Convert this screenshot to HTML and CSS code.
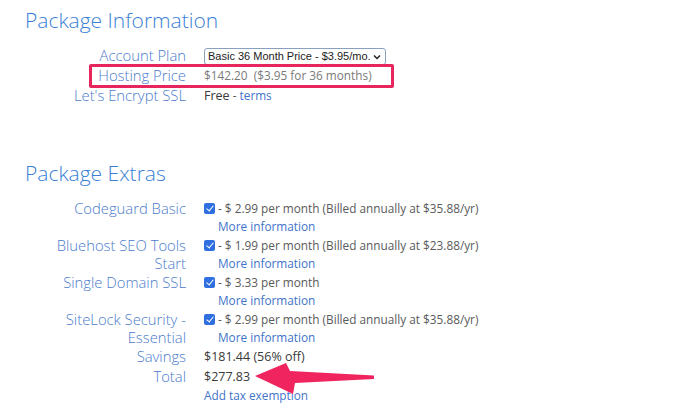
FILE: index.html
```html
<!DOCTYPE html>
<html>
<head>
<meta charset="utf-8">
<link rel="stylesheet" href="styles.css">
</head>
<body>
<div class="page">
  <section class="block">
    <h2 class="heading">Package Information</h2>
    <div class="grid">
      <div class="label">Account Plan</div>
      <div class="value">
        <div class="select"><span>Basic 36 Month Price - $3.95/mo.</span><svg class="caret" width="8" height="6" viewBox="0 0 8 6"><path d="M1 1.5 L4 4.5 L7 1.5" fill="none" stroke="#222" stroke-width="1.5"/></svg></div>
      </div>
      <div class="label">Hosting Price</div>
      <div class="value muted">$142.20&nbsp; ($3.95 for 36 months)</div>
      <div class="label">Let's Encrypt SSL</div>
      <div class="value"><span class="dark strong">Free</span> - <span class="link">terms</span></div>
    </div>
  </section>

  <section class="block extras">
    <h2 class="heading">Package Extras</h2>
    <div class="grid">
      <div class="label">Codeguard Basic</div>
      <div class="value opt-row"><span class="cb"></span><span class="opt">- $ 2.99 per month (Billed annually at $35.88/yr)<br><span class="link">More information</span></span></div>
      <div class="label">Bluehost SEO Tools<br>Start</div>
      <div class="value opt-row"><span class="cb"></span><span class="opt">- $ 1.99 per month (Billed annually at $23.88/yr)<br><span class="link">More information</span></span></div>
      <div class="label">Single Domain SSL</div>
      <div class="value opt-row"><span class="cb"></span><span class="opt">- $ 3.33 per month<br><span class="link">More information</span></span></div>
      <div class="label">SiteLock Security -<br>Essential</div>
      <div class="value opt-row"><span class="cb"></span><span class="opt">- $ 2.99 per month (Billed annually at $35.88/yr)<br><span class="link">More information</span></span></div>
      <div class="label">Savings</div>
      <div class="value dark strong">$181.44 (56% off)</div>
      <div class="label">Total</div>
      <div class="value dark strong">$277.83</div>
      <div class="label"></div>
      <div class="value"><span class="link">Add tax exemption</span></div>
    </div>
  </section>

  <div class="highlight"></div>
  <svg class="arrow" width="130" height="40" viewBox="250 360 130 40">
    <polygon points="255,376 286,363 290,371 374,375.5 374,379 295,383 293,394" fill="#f0245e"/>
  </svg>
</div>
</body>
</html>
```

FILE: styles.css
```css
html, body {
  margin: 0;
  padding: 0;
  background: #ffffff;
}
.page {
  position: relative;
  width: 700px;
  height: 420px;
  overflow: hidden;
  padding-left: 25px;
  box-sizing: border-box;
  font-family: "Open Sans", "Liberation Sans", sans-serif;
}
.heading {
  margin: 0;
  padding-top: 5px;
  font-size: 21px;
  font-weight: 300;
  line-height: 30px;
  color: #3a7fd6;
}
.extras {
  margin-top: 49px;
}
.extras .heading {
  margin-bottom: 12px;
}
.block:first-child .heading {
  margin-bottom: 12px;
}
.grid {
  display: grid;
  grid-template-columns: 161px auto;
  column-gap: 18px;
  row-gap: 2px;
}
.label {
  text-align: right;
  font-size: 14.8px;
  font-weight: 300;
  line-height: 17.5px;
  color: #4a7bcc;
}
.value {
  font-size: 11.8px;
  line-height: 17.5px;
  color: #5a5a5a;
}
.opt-row {
  display: flex;
  align-items: flex-start;
}
.muted {
  color: #7a7a7a;
}
.dark {
  color: #3a3a3a;
}
.strong {
  font-size: 12.5px;
}
.link {
  color: #3f74c9;
}
.select {
  display: flex;
  align-items: center;
  justify-content: space-between;
  width: 182px;
  height: 17px;
  margin-top: 1px;
  box-sizing: border-box;
  border: 1px solid #8aa0c0;
  border-radius: 3px;
  padding: 0 4px 0 3px;
  font-family: "Liberation Sans", Arial, sans-serif;
  font-size: 11px;
  color: #222;
  white-space: nowrap;
}
.caret {
  flex: none;
}
.cb {
  flex: none;
  width: 11px;
  height: 11px;
  margin-top: 3px;
  margin-right: 3px;
  border-radius: 2px;
  background: #2f6fe0;
  position: relative;
}
.cb::after {
  content: "";
  position: absolute;
  left: 3.5px;
  top: 1px;
  width: 3px;
  height: 6px;
  border: solid #fff;
  border-width: 0 1.6px 1.6px 0;
  transform: rotate(40deg);
}
.highlight {
  position: absolute;
  left: 89px;
  top: 64px;
  width: 305px;
  height: 24px;
  box-sizing: border-box;
  border: 3px solid #e8265e;
  border-radius: 2px;
}
.arrow {
  position: absolute;
  left: 250px;
  top: 360px;
}
```
